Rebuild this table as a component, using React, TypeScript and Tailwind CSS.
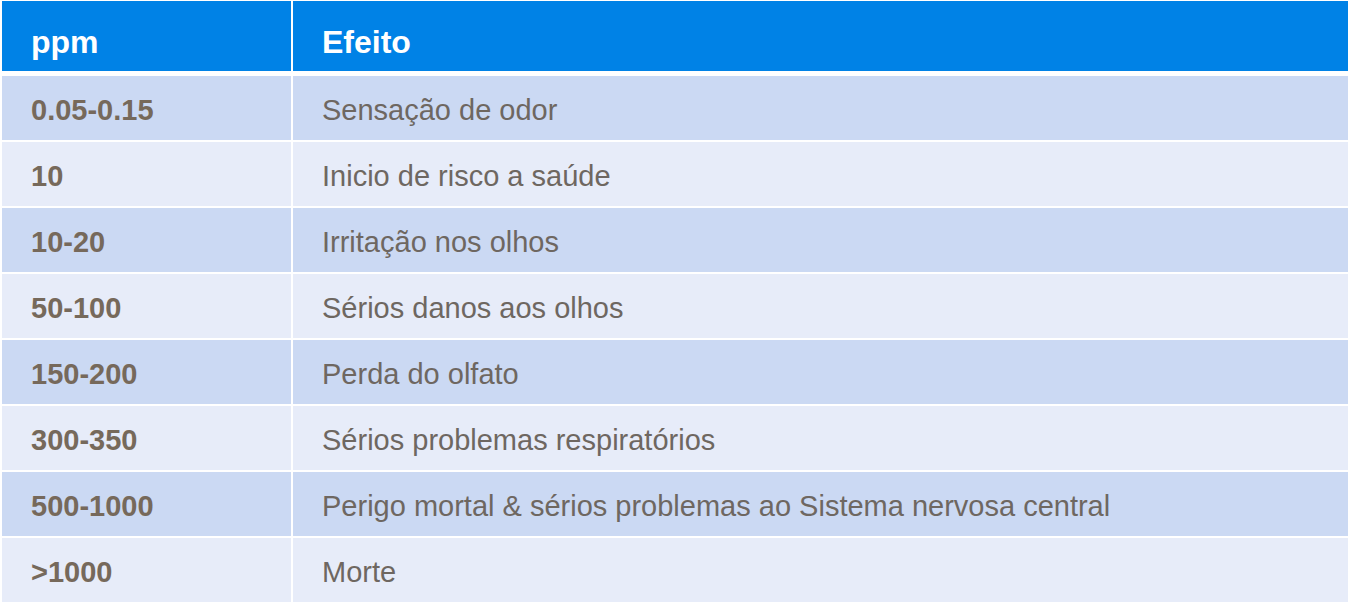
import React from "react";

const rows = [
  { ppm: "0.05-0.15", efeito: "Sensação de odor" },
  { ppm: "10", efeito: "Inicio de risco a saúde" },
  { ppm: "10-20", efeito: "Irritação nos olhos" },
  { ppm: "50-100", efeito: "Sérios danos aos olhos" },
  { ppm: "150-200", efeito: "Perda do olfato" },
  { ppm: "300-350", efeito: "Sérios problemas respiratórios" },
  { ppm: "500-1000", efeito: "Perigo mortal & sérios problemas ao Sistema nervosa central" },
  { ppm: ">1000", efeito: "Morte" },
];

const App = () => {
  return (
    <div className="w-[1350px] h-[606px] bg-white pl-[2px] pr-[2px] pt-[1px] font-['Liberation_Sans',Arial,sans-serif]">
      <div className="flex flex-col gap-[2px]">
        {/* header */}
        <div className="grid grid-cols-[289px_1fr] gap-x-[2px] h-[70px] mb-[3px]">
          <div className="bg-[#0082e6] flex items-center pl-[29px] pt-[12px] text-white font-bold text-[32px]">
            ppm
          </div>
          <div className="bg-[#0082e6] flex items-center pl-[29px] pt-[12px] text-white font-bold text-[32px]">
            Efeito
          </div>
        </div>

        {rows.map((row, i) => {
          const bg = i % 2 === 0 ? "bg-[#cbd9f3]" : "bg-[#e7ecf9]";
          return (
            <div key={i} className="grid grid-cols-[289px_1fr] gap-x-[2px] h-[64px]">
              <div className={`${bg} flex items-center pl-[29px] pt-[6px] text-[29px] font-bold text-[#76695b]`}>
                {row.ppm}
              </div>
              <div className={`${bg} flex items-center pl-[29px] pt-[6px] text-[29px] text-[#6e6761]`}>
                {row.efeito}
              </div>
            </div>
          );
        })}
      </div>
    </div>
  );
};

export default App;
